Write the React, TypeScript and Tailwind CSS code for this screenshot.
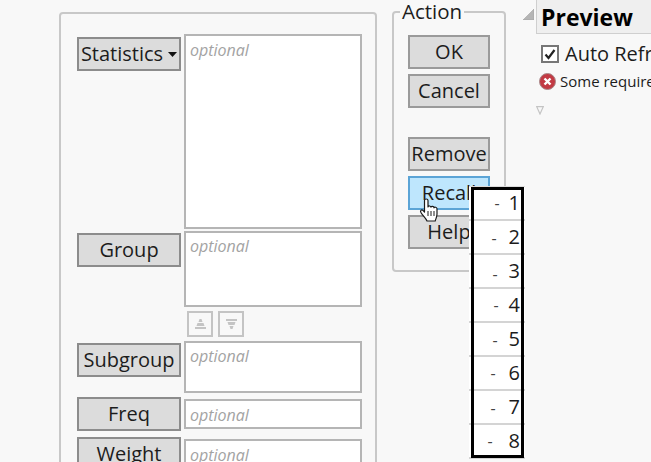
const fieldBase = 'flex-none w-[178px] bg-white border-2 border-[#b5b5b5] pl-[4px] text-[16px] italic text-[#a3a3a3] leading-[20px]';
const btnBase = 'flex items-center justify-center flex-none w-[104px] h-[34px] bg-[#dcdcdc] border-2 border-[#8c8c8c] text-[20px] text-[#1c1c1c]';
const actionBtn = 'flex items-center justify-center w-[82px] h-[34px] bg-[#dcdcdc] border-2 border-[#9a9a9a] text-[20px] text-[#1c1c1c]';

const recallItems = [
  { n: 1, gap: 'mr-[9px]', drop: 'mt-0' },
  { n: 2, gap: 'mr-[12px]', drop: 'mt-[2px]' },
  { n: 3, gap: 'mr-[11px]', drop: 'mt-[6px]' },
  { n: 4, gap: 'mr-[10px]', drop: 'mt-0' },
  { n: 5, gap: 'mr-[11px]', drop: 'mt-[2px]' },
  { n: 6, gap: 'mr-[13px]', drop: 'mt-0' },
  { n: 7, gap: 'mr-[13px]', drop: 'mt-[2px]' },
  { n: 8, gap: 'mr-[16px]', drop: 'mt-0' },
];

function RecallMenu() {
  return (
    <div className="absolute left-[469px] top-[186px] w-[56px]">
      <div className="flex flex-col border-t border-[#dcdcdc]">
        {recallItems.map((item) => (
          <div key={item.n} className="flex items-center justify-end h-[34px] pr-[5px] bg-white border-b-2 border-[#d4d4d4] text-[20px] text-[#1c1c1c] box-border">
            <span className={`text-[16px] leading-[14px] text-[#444] ${item.gap} ${item.drop}`}>-</span>
            <span>{item.n}</span>
          </div>
        ))}
      </div>
      <div className="absolute left-[2px] top-[1px] w-[53px] h-[271px] border-[3px] border-black pointer-events-none" />
    </div>
  );
}

function HandCursor() {
  return (
    <svg className="absolute left-[419px] top-[198px]" width="20" height="24" viewBox="0 0 20 24">
      <path
        d="M5.500 2.500C5.500.5 9 .5 9 2.500V9c.2-1.400 2.800-1.400 3 .2.300-1.200 2.800-1.200 3 .6.400-1 2.800-.8 3 1V16c0 3-1.200 4.500-1.800 7H8c-1-3-3.500-4.500-5.800-8-1.700-2.200.3-4 2-2.400L5.500 14z"
        fill="#fff"
        stroke="#1a1a1a"
        strokeWidth="1.200"
        strokeLinejoin="round"
      />
      <path d="M9 13v5M12 13v5M15 13v5" stroke="#1a1a1a" strokeWidth="1" fill="none" />
    </svg>
  );
}

export default function App() {
  return (
    <div className="relative flex items-start w-[651px] h-[462px] overflow-hidden bg-[#f8f8f8] font-['Open_Sans','Noto_Sans',sans-serif]">
      {/* Variables panel */}
      <div className="flex-none ml-[59px] mt-[12px] w-[318px] h-[470px] pl-[16px] pt-[20px] border-2 border-[#c8c8c8] rounded-[4px]">
        <div className="flex gap-[3px]">
          <div className={`${btnBase} mt-[3px]`}>
            Statistics
            <svg className="ml-[5px]" width="9" height="5" viewBox="0 0 9 5"><path d="M0 0h9L4.500 5z" fill="#111" /></svg>
          </div>
          <div className={`${fieldBase} h-[195px] pt-[4px]`}>optional</div>
        </div>
        <div className="flex gap-[3px] mt-[2px]">
          <div className={`${btnBase} mt-[2px]`}>Group</div>
          <div className={`${fieldBase} h-[76px] pt-[3px]`}>optional</div>
        </div>
        <div className="flex gap-[5px] ml-[110px] mt-[4px]">
          <div className="flex items-center justify-center w-[26px] h-[26px] border-2 border-[#c4c4c4]">
            <svg width="11" height="11" viewBox="0 0 11 11" fill="#c4c4c4"><path d="M4.500 0h2l1 3h-4zM2.500 4h6l1 3h-8zM0 8h11v2H0z" /></svg>
          </div>
          <div className="flex items-center justify-center w-[26px] h-[26px] border-2 border-[#c4c4c4]">
            <svg width="11" height="11" viewBox="0 0 11 11" fill="#c4c4c4"><path d="M0 0h11v2H0zM1.500 3h8l-1 3h-6zM3.500 7h4l-1 3h-2z" /></svg>
          </div>
        </div>
        <div className="flex gap-[3px] mt-[4px]">
          <div className={`${btnBase} mt-[2px]`}>Subgroup</div>
          <div className={`${fieldBase} h-[52px] pt-[3px]`}>optional</div>
        </div>
        <div className="flex gap-[3px] mt-[4px]">
          <div className={btnBase}>Freq</div>
          <div className={`${fieldBase} h-[30px] mt-[2px] pt-[4px]`}>optional</div>
        </div>
        <div className="flex gap-[3px] mt-[6px]">
          <div className={btnBase}>Weight</div>
          <div className={`${fieldBase} h-[30px] mt-[2px] pt-[4px]`}>optional</div>
        </div>
      </div>

      {/* Action group */}
      <fieldset className="flex-none ml-[15px] w-[114px] h-[272px] px-[14px] border-2 border-[#c8c8c8] rounded-[4px]">
        <legend className="relative top-[-1px] ml-[-8px] px-[2px] text-[20.500px] leading-[24px] text-[#1c1c1c]">Action</legend>
        <div className="flex flex-col mt-[11px] gap-[5px]">
          <div className={actionBtn}>OK</div>
          <div className={actionBtn}>Cancel</div>
          <div className={`${actionBtn} mt-[24px]`}>Remove</div>
          <div className="flex items-center justify-center w-[82px] h-[34px] bg-[#bee6fd] border-2 border-[#5ba4d6] text-[20px] text-[#1c1c1c]">Recall</div>
          <div className={actionBtn}>Help</div>
        </div>
      </fieldset>

      {/* Preview */}
      <div className="flex-none ml-[17px] w-[128px]">
        <div className="flex items-start">
          <svg className="flex-none mt-[9px]" width="11" height="11" viewBox="0 0 11 11"><path d="M11 0v11H0z" fill="#b5b5b5" stroke="#999" strokeWidth=".5" /></svg>
          <div className="flex-none w-[200px] h-[34px] ml-[2px] pl-[4px] bg-[#efefef] border-l border-b border-[#cfcfcf] text-[23px] leading-[34px] font-bold text-black">Preview</div>
        </div>
        <div className="flex items-center ml-[18px] mt-[8px] whitespace-nowrap">
          <div className="flex flex-none items-center justify-center w-[18px] h-[18px] bg-white border-2 border-[#777]">
            <svg width="12" height="11" viewBox="0 0 12 11"><path d="M1.500 5.500l3 3.500 6-8" fill="none" stroke="#222" strokeWidth="2.200" /></svg>
          </div>
          <span className="ml-[6px] text-[20px] leading-[24px] text-[#1c1c1c]">Auto Refresh</span>
        </div>
        <div className="flex items-center ml-[16px] mt-[5px] whitespace-nowrap">
          <svg className="flex-none" width="17" height="17" viewBox="0 0 17 17">
            <circle cx="8.500" cy="8.500" r="8" fill="#c23a44" stroke="#a8888a" />
            <path d="M5.500 5.500l6 6M11.500 5.500l-6 6" stroke="#fff" strokeWidth="2.400" />
          </svg>
          <span className="ml-[4px] text-[15px] leading-[20px] text-[#1c1c1c]">Some required</span>
        </div>
        <svg className="ml-[13px] mt-[15px]" width="8" height="9" viewBox="0 0 8 9"><path d="M.7.700h6.600L4 8z" fill="none" stroke="#c4c4c4" strokeWidth="1.200" /></svg>
      </div>

      <RecallMenu />
      <HandCursor />
    </div>
  );
}
